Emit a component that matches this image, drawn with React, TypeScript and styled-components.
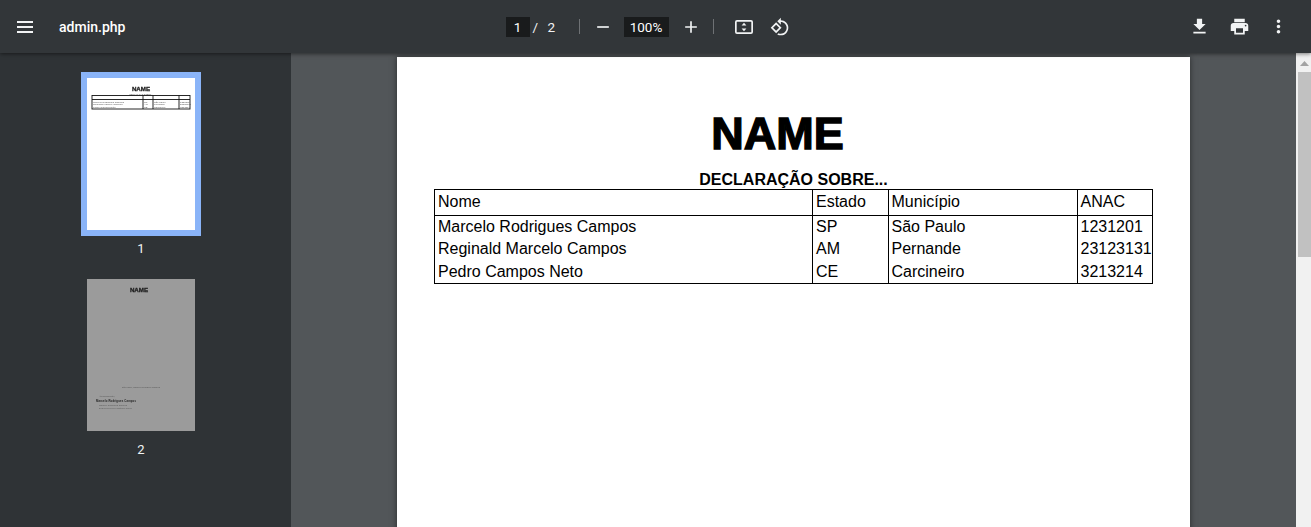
import React from 'react';
import styled, { createGlobalStyle } from 'styled-components';

const GlobalStyle = createGlobalStyle`
  html,
  body {
    margin: 0;
    height: 100%;
    overflow: hidden;
    background: #525659;
  }
`;

const Viewer = styled.div`
  display: flex;
  flex-direction: column;
  width: 1311px;
  height: 527px;
  overflow: hidden;
  font-family: Roboto, 'Liberation Sans', sans-serif;
`;

const Toolbar = styled.header`
  position: relative;
  z-index: 2;
  flex: 0 0 53px;
  display: grid;
  grid-template-columns: 1fr auto 1fr;
  align-items: center;
  padding-right: 22px;
  background: #323639;
  box-shadow: 0 1px 4px rgba(0, 0, 0, 0.5);
  color: #f1f3f4;
`;

const ToolbarStart = styled.div`
  display: flex;
  align-items: center;
  padding-left: 13px;
`;

const FileName = styled.span`
  margin-left: 22px;
  font-size: 14px;
  font-weight: 500;
  color: #fff;
`;

const ToolbarCenter = styled.div`
  display: flex;
  align-items: center;
  padding-left: 6px;
`;

const ToolbarEnd = styled.div`
  display: flex;
  align-items: center;
  justify-content: flex-end;
  gap: 18.500px;
`;

const NumberField = styled.span<{ $width: number }>`
  display: flex;
  align-items: center;
  justify-content: center;
  width: ${(p) => p.$width}px;
  height: 20px;
  background: #191b1c;
  font-size: 13.500px;
  color: #fff;
`;

const PageCount = styled.span`
  margin-left: 3px;
  width: 25px;
  font-size: 13.500px;
  color: #f1f3f4;
  word-spacing: 6px;
`;

const Divider = styled.span<{ $left: number; $right: number }>`
  width: 1px;
  height: 15px;
  margin-left: ${(p) => p.$left}px;
  margin-right: ${(p) => p.$right}px;
  background: #6e7174;
`;

const IconBox = styled.svg<{ $size?: number }>`
  display: block;
  flex: none;
  width: ${(p) => p.$size ?? 24}px;
  height: ${(p) => p.$size ?? 24}px;
  fill: #f1f3f4;
`;

const ZoomIcon = styled(IconBox)<{ $before?: number; $after?: number }>`
  margin-left: ${(p) => p.$before ?? 0}px;
  margin-right: ${(p) => p.$after ?? 0}px;
`;

const Body = styled.div`
  flex: 1;
  display: flex;
  min-height: 0;
`;

const Sidebar = styled.aside`
  flex: 0 0 291px;
  box-sizing: border-box;
  display: flex;
  flex-direction: column;
  align-items: center;
  padding: 25px 10px 0 0;
  background: #2f3336;
`;

const Thumb = styled.figure`
  display: flex;
  flex-direction: column;
  align-items: center;
  margin: 0 0 23px;
`;

const ThumbPage = styled.div<{ $selected?: boolean; $muted?: boolean }>`
  width: 108px;
  height: 152px;
  background: ${(p) => (p.$muted ? '#9b9b9b' : '#fff')};
  outline: ${(p) => (p.$selected ? '6px solid #8ab4f8' : 'none')};
  overflow: hidden;
`;

const ThumbLabel = styled.figcaption`
  margin-top: 11px;
  padding-left: 1px;
  font-size: 13px;
  line-height: 15px;
  color: #f1f3f4;
`;

const ThumbArt = styled.svg`
  display: block;
  width: 108px;
  height: 152px;
  filter: blur(0.3px);
`;

const ThumbTitle = styled.text`
  font-family: 'Liberation Sans', sans-serif;
  font-size: 6.200px;
  font-weight: 700;
  fill: #222;
  stroke: #222;
  stroke-width: 0.3px;
`;

const ThumbSmall = styled.text<{ $size?: number; $bold?: boolean }>`
  font-family: 'Liberation Sans', sans-serif;
  font-size: ${(p) => p.$size ?? 2.2}px;
  font-weight: ${(p) => (p.$bold ? 700 : 400)};
  fill: ${(p) => (p.$bold ? '#222' : '#555')};
`;

const Main = styled.main`
  flex: 1;
  display: flex;
  justify-content: center;
  align-items: flex-start;
  padding-top: 4px;
  background: #525659;
  min-width: 0;
`;

const Page = styled.article`
  flex: none;
  width: 793px;
  height: 480px;
  padding: 53px 37px 0;
  box-sizing: border-box;
  background: #fff;
  box-shadow: 0 0 6px rgba(0, 0, 0, 0.5);
  font-family: 'Liberation Sans', Arial, sans-serif;
  color: #000;
`;

const Title = styled.h1`
  margin: 0;
  height: 60px;
  padding-right: 32px;
  text-align: center;
  font-size: 45px;
  line-height: 48px;
  font-weight: 700;
  -webkit-text-stroke: 1.400px #000;
`;

const Subtitle = styled.h2`
  margin: 0;
  height: 19px;
  text-align: center;
  font-size: 16px;
  line-height: 20px;
  font-weight: 700;
`;

const Table = styled.table`
  width: 718px;
  table-layout: fixed;
  border-collapse: collapse;
  font-size: 16px;
  color: #000;
`;

const HeadCell = styled.th`
  height: 23px;
  padding: 0 3px 2px;
  border: 1px solid #000;
  font-weight: 400;
  text-align: left;
  white-space: nowrap;
`;

const Cell = styled.td<{ $first?: boolean; $last?: boolean }>`
  height: ${(p) => (p.$first ? 22 : 22.5)}px;
  padding: 0 3px;
  border-left: 1px solid #000;
  border-right: 1px solid #000;
  border-bottom: ${(p) => (p.$last ? '1px solid #000' : 'none')};
  white-space: nowrap;
  overflow: hidden;
`;

const Scrollbar = styled.div`
  flex: 0 0 15px;
  display: flex;
  flex-direction: column;
  background: #f1f1f1;
`;

const ScrollArrow = styled.div`
  display: flex;
  justify-content: center;
  height: 11px;
  padding: 8px 0 0 2px;
`;

const ScrollThumb = styled.div`
  height: 185px;
  margin-left: 2px;
  background: #c1c1c1;
`;

const columns = [378, 75.5, 189, 75.5];
const thumbColumns = [56, 66, 92];
const heads = ['Nome', 'Estado', 'Município', 'ANAC'];
const rows = [
  ['Marcelo Rodrigues Campos', 'SP', 'São Paulo', '1231201'],
  ['Reginald Marcelo Campos', 'AM', 'Pernande', '23123131'],
  ['Pedro Campos Neto', 'CE', 'Carcineiro', '3213214'],
];

const Icon = ({ d, size }: { d: string; size?: number }) => (
  <IconBox viewBox="0 0 24 24" $size={size}>
    <path d={d} />
  </IconBox>
);

const FirstThumb = () => (
  <ThumbArt viewBox="0 0 108 152">
    <ThumbTitle x="54" y="13" textAnchor="middle">NAME</ThumbTitle>
    <ThumbSmall x="54" y="16.800" textAnchor="middle" $size={2}>DECLARAÇÃO SOBRE...</ThumbSmall>
    <g stroke="#111" strokeWidth="0.9" fill="none">
      <rect x="5" y="17.500" width="98" height="13.500" />
      <path d="M5 21.500h98" />
      {thumbColumns.map((x) => (
        <path key={x} d={`M${x} 17.500v13.500`} />
      ))}
    </g>
    {rows.map((row, i) => (
      <g key={row[0]}>
        <ThumbSmall x="6" y={24.5 + i * 2.6} $size={2.5}>{row[0]}</ThumbSmall>
        <ThumbSmall x="57" y={24.5 + i * 2.6} $size={2.5}>{row[1]}</ThumbSmall>
        <ThumbSmall x="67" y={24.5 + i * 2.6} $size={2.5}>{row[2]}</ThumbSmall>
        <ThumbSmall x="93" y={24.5 + i * 2.6} $size={2.5}>{row[3]}</ThumbSmall>
      </g>
    ))}
  </ThumbArt>
);

const SecondThumb = () => (
  <ThumbArt viewBox="0 0 108 152">
    <ThumbTitle x="52" y="13" textAnchor="middle">NAME</ThumbTitle>
    <ThumbSmall x="35" y="109" $size={2.2} textLength={38}>São Paulo, Marcelo Rodrigues Campos</ThumbSmall>
    <ThumbSmall x="12" y="118" $size={2.2} textLength={16}>Atenciosamente,</ThumbSmall>
    <ThumbSmall x="9" y="123" $size={2.8} $bold textLength={40}>Marcelo Rodrigues Campos</ThumbSmall>
    <ThumbSmall x="12" y="127" $size={2.2} textLength={28}>Marcelo Rodrigues Campos</ThumbSmall>
    <ThumbSmall x="12" y="130" $size={2.2} textLength={33}>Desenvolvedor Fullstack Junior</ThumbSmall>
  </ThumbArt>
);

export default function App() {
  return (
    <Viewer>
      <GlobalStyle />
      <Toolbar>
        <ToolbarStart>
          <Icon d="M4 18h16v-2H4v2zm0-5h16v-2H4v2zm0-7v2h16V6H4z" />
          <FileName>admin.php</FileName>
        </ToolbarStart>
        <ToolbarCenter>
          <NumberField $width={24}>1</NumberField>
          <PageCount>/ 2</PageCount>
          <Divider $left={21} $right={13} />
          <ZoomIcon viewBox="0 0 24 24" $size={20} $after={11}>
            <path d="M19 13H5v-2h14v2z" />
          </ZoomIcon>
          <NumberField $width={45}>100%</NumberField>
          <ZoomIcon viewBox="0 0 24 24" $size={20} $before={12}>
            <path d="M19 13h-6v6h-2v-6H5v-2h6V5h2v6h6v2z" />
          </ZoomIcon>
          <Divider $left={12} $right={18} />
          <ZoomIcon viewBox="0 0 24 24" $after={14}>
            <path d="M5 5h14a2 2 0 0 1 2 2v10a2 2 0 0 1-2 2H5a2 2 0 0 1-2-2V7a2 2 0 0 1 2-2zm0 1.700a.3.3 0 0 0-.3.3v10c0 .17.13.3.3.3h14a.3.3 0 0 0 .3-.3V7a.3.3 0 0 0-.3-.3H5z" />
            <path d="M12 7.800l2.400 2.700H9.600zM12 16.200l-2.400-2.700h4.800z" />
          </ZoomIcon>
          <ZoomIcon viewBox="0 0 24 24" $size={20}>
            <path d="M7.340 6.410L.860 12.900l6.490 6.480 6.490-6.480-6.500-6.490zM3.690 12.900l3.660-3.660L11 12.900l-3.660 3.660-3.650-3.660zm15.670-6.260C17.610 4.880 15.300 4 13 4V.760L8.760 5 13 9.240V6c1.790 0 3.580.680 4.950 2.050 2.730 2.730 2.730 7.170 0 9.900C16.580 19.320 14.790 20 13 20c-.970 0-1.940-.210-2.840-.610l-1.490 1.490C10.020 21.620 11.510 22 13 22c2.300 0 4.610-.880 6.360-2.640 3.520-3.510 3.520-9.210 0-12.720z" />
          </ZoomIcon>
        </ToolbarCenter>
        <ToolbarEnd>
          <Icon size={21} d="M19 9h-4V3H9v6H5l7 7 7-7zM5 18v2h14v-2H5z" />
          <Icon size={21} d="M19 8H5c-1.660 0-3 1.340-3 3v6h4v4h12v-4h4v-6c0-1.660-1.340-3-3-3zm-3 11H8v-5h8v5zm3-7c-.550 0-1-.450-1-1s.450-1 1-1 1 .450 1 1-.450 1-1 1zm-1-9H6v4h12V3z" />
          <Icon size={21} d="M12 8c1.100 0 2-.900 2-2s-.900-2-2-2-2 .900-2 2 .900 2 2 2zm0 2c-1.100 0-2 .900-2 2s.900 2 2 2 2-.900 2-2-.900-2-2-2zm0 6c-1.100 0-2 .900-2 2s.900 2 2 2 2-.900 2-2-.900-2-2-2z" />
        </ToolbarEnd>
      </Toolbar>
      <Body>
        <Sidebar>
          <Thumb>
            <ThumbPage $selected>
              <FirstThumb />
            </ThumbPage>
            <ThumbLabel>1</ThumbLabel>
          </Thumb>
          <Thumb>
            <ThumbPage $muted>
              <SecondThumb />
            </ThumbPage>
            <ThumbLabel>2</ThumbLabel>
          </Thumb>
        </Sidebar>
        <Main>
          <Page>
            <Title>NAME</Title>
            <Subtitle>DECLARAÇÃO SOBRE...</Subtitle>
            <Table>
              <colgroup>
                {columns.map((w, i) => (
                  <col key={i} width={w} />
                ))}
              </colgroup>
              <thead>
                <tr>
                  {heads.map((h) => (
                    <HeadCell key={h}>{h}</HeadCell>
                  ))}
                </tr>
              </thead>
              <tbody>
                {rows.map((row, i) => (
                  <tr key={row[0]}>
                    {row.map((value) => (
                      <Cell key={value} $first={i === 0} $last={i === rows.length - 1}>
                        {value}
                      </Cell>
                    ))}
                  </tr>
                ))}
              </tbody>
            </Table>
          </Page>
        </Main>
        <Scrollbar>
          <ScrollArrow>
            <svg width="9" height="5" viewBox="0 0 9 5">
              <path d="M4.500 0L9 5H0z" fill="#a3a3a3" />
            </svg>
          </ScrollArrow>
          <ScrollThumb />
        </Scrollbar>
      </Body>
    </Viewer>
  );
}
